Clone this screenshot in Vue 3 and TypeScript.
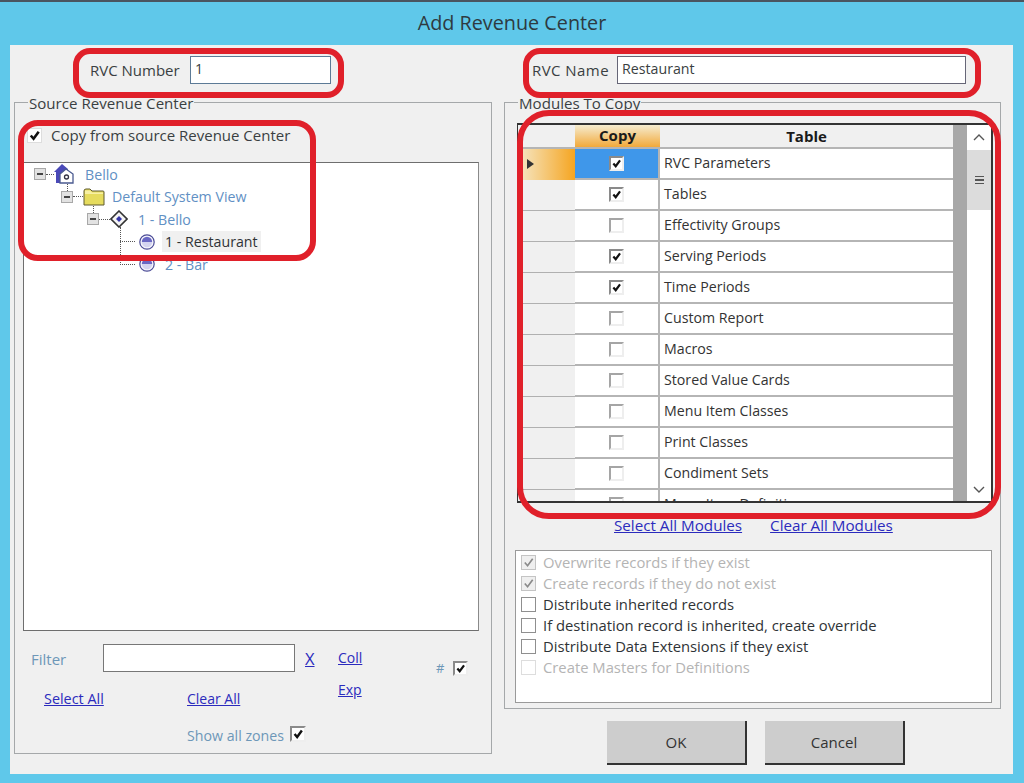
<script setup lang="ts">
interface Row { name: string; on: boolean }
const rows: Row[] = [
  { name: 'RVC Parameters', on: true },
  { name: 'Tables', on: true },
  { name: 'Effectivity Groups', on: false },
  { name: 'Serving Periods', on: true },
  { name: 'Time Periods', on: true },
  { name: 'Custom Report', on: false },
  { name: 'Macros', on: false },
  { name: 'Stored Value Cards', on: false },
  { name: 'Menu Item Classes', on: false },
  { name: 'Print Classes', on: false },
  { name: 'Condiment Sets', on: false },
  { name: 'Menu Item Definitions', on: false },
]
interface Opt { text: string; state: 'grey' | 'empty' | 'disabled' }
const opts: Opt[] = [
  { text: 'Overwrite records if they exist', state: 'grey' },
  { text: 'Create records if they do not exist', state: 'grey' },
  { text: 'Distribute inherited records', state: 'empty' },
  { text: 'If destination record is inherited, create override', state: 'empty' },
  { text: 'Distribute Data Extensions if they exist', state: 'empty' },
  { text: 'Create Masters for Definitions', state: 'disabled' },
]
</script>

<template>
  <div class="screen">
    <div class="tick"></div>
    <header class="title">Add Revenue Center</header>
    <main class="win">
      <section class="col left">
        <div class="toprow num">
          <label>RVC Number</label>
          <div class="input w140">1</div>
        </div>
        <div class="group gl">
          <span class="legend">Source Revenue Center</span>
          <div class="copyfrom">
            <span class="cb plain"><svg viewBox="0 0 14 14"><path d="M3 7l3 3.5L11.5 3" /></svg></span>
            <span>Copy from source Revenue Center</span>
          </div>
          <div class="tree">
            <div class="node l1">
              <span class="exp"></span><span class="dots d7"></span>
              <svg class="ic house" viewBox="0 0 20 20">
                <path d="M0 8L8 0l6 5v14H2V8z" fill="#4a49b8" />
                <path d="M6 10l6-5 7 5v9H6z" fill="#fff" stroke="#4a5a90" stroke-width="1.3" />
                <circle cx="12.5" cy="13" r="2" fill="none" stroke="#334" stroke-width="1.3" />
              </svg>
              <span class="lbl t11">Bello</span>
            </div>
            <div class="node l2">
              <span class="exp up"></span><span class="dots d9"></span>
              <svg class="ic folder" viewBox="0 0 22 18">
                <path d="M1 3a2 2 0 0 1 2-2h4l2 2h11a1 1 0 0 1 1 1v13H1z" fill="#e6dc5e" stroke="#5e5b30" />
                <path d="M2 2.500h5l2 2h11v1.500H2z" fill="#f7f0a4" />
              </svg>
              <span class="lbl t8">Default System View</span>
            </div>
            <div class="node l3">
              <span class="exp up"></span><span class="dots d10"></span>
              <svg class="ic diamond" viewBox="0 0 18 18">
                <path d="M9 1l8 8-8 8-8-8z" fill="#f5f5f5" stroke="#333" stroke-width="1.6" />
                <path d="M9 6l3 3-3 3-3-3z" fill="#3535a8" />
              </svg>
              <span class="lbl t10">1 - Bello</span>
              <span class="vline"></span>
            </div>
            <div class="node l4">
              <span class="dots d15"></span>
              <svg class="ic radio" viewBox="0 0 16 16">
                <circle cx="8" cy="8" r="7.200" fill="#f4f4fb" stroke="#4b4b96" stroke-width="1.200" />
                <path d="M2.800 8a5.200 5.200 0 0 1 10.400 0z" fill="#6a68c4" /><path d="M2.800 8a5.200 5.200 0 0 0 10.400 0z" fill="#d4d4f0" />
              </svg>
              <span class="lbl sel">1 - Restaurant</span>
            </div>
            <div class="node l4">
              <span class="dots d15"></span>
              <svg class="ic radio" viewBox="0 0 16 16">
                <circle cx="8" cy="8" r="7.200" fill="#f4f4fb" stroke="#4b4b96" stroke-width="1.200" />
                <path d="M2.800 8a5.200 5.200 0 0 1 10.400 0z" fill="#6a68c4" /><path d="M2.800 8a5.200 5.200 0 0 0 10.400 0z" fill="#d4d4f0" />
              </svg>
              <span class="lbl t10">2 - Bar</span>
            </div>
          </div>
          <div class="filter">
            <span class="flabel a-filter">Filter</span>
            <div class="input a-input"></div>
            <a class="link a-x">X</a>
            <a class="link sm a-coll">Coll</a>
            <a class="link sm a-exp">Exp</a>
            <div class="a-hash"><span class="flabel">#</span><span class="cb dark"><svg viewBox="0 0 14 14"><path d="M3 7l3 3.5L11.5 3" /></svg></span></div>
            <a class="link sm a-sel">Select All</a>
            <a class="link sm a-clr">Clear All</a>
            <div class="a-zones"><span class="flabel">Show all zones</span><span class="cb dark"><svg viewBox="0 0 14 14"><path d="M3 7l3 3.5L11.5 3" /></svg></span></div>
          </div>
        </div>
      </section>

      <section class="col right">
        <div class="toprow name">
          <label>RVC Name</label>
          <div class="input w348">Restaurant</div>
        </div>
        <div class="group gr">
          <span class="legend">Modules To Copy</span>
          <div class="grid">
            <div class="gridbody">
              <div class="ghead">
                <div class="c0"></div>
                <div class="c1 hcopy">Copy</div>
                <div class="c2 htable">Table</div>
              </div>
              <div v-for="(r, i) in rows" :key="r.name" class="grow">
                <div class="c0" :class="{ cur: i === 0 }"><span v-if="i === 0" class="arrow"></span></div>
                <div class="c1 cell" :class="{ active: i === 0 }">
                  <span class="cb" :class="r.on ? 'dark' : 'off'"><svg v-if="r.on" viewBox="0 0 14 14"><path d="M3 7l3 3.5L11.5 3" /></svg></span>
                </div>
                <div class="c2 cell txt">{{ r.name }}</div>
              </div>
            </div>
            <div class="strip"></div>
            <div class="sbar">
              <svg class="sarrow" viewBox="0 0 22 24"><path d="M6 15l5-5 5 5" /></svg>
              <div class="thumb"><i></i><i></i><i></i></div>
              <div class="track"></div>
              <svg class="sarrow" viewBox="0 0 22 24"><path d="M6 10l5 5 5-5" /></svg>
            </div>
          </div>
          <div class="modlinks">
            <a class="link">Select All Modules</a>
            <a class="link">Clear All Modules</a>
          </div>
          <div class="opts">
            <div v-for="o in opts" :key="o.text" class="opt" :class="o.state">
              <span class="cb"><svg v-if="o.state === 'grey'" viewBox="0 0 14 14"><path d="M3 7l3 3.5L11.5 3" /></svg></span>
              <span>{{ o.text }}</span>
            </div>
          </div>
        </div>
        <div class="btns">
          <button class="btn">OK</button>
          <button class="btn">Cancel</button>
        </div>
      </section>

      <div class="mark m1"></div>
      <div class="mark m2"></div>
      <div class="mark m3"></div>
      <div class="mark m4"></div>
    </main>
  </div>
</template>

<style>
html, body { margin: 0; background: #5fc8ea; }
</style>

<style scoped>
* { box-sizing: border-box; }
.screen {
  position: relative; width: 1024px; height: 783px; overflow: hidden;
  background: #5fc8ea; border-top: 2px solid #4a5560;
  font-family: "Open Sans", "Noto Sans", sans-serif; font-size: 15px; color: #3a3f42;
}
.tick { position: absolute; left: 619px; top: -2px; width: 1px; height: 2px; background: #333; }
.title { height: 43px; padding-top: 6px; text-align: center; font-size: 19.8px; line-height: 30px; color: #2e3a40; }
.win {
  position: relative; width: 1003px; height: 729px; margin-left: 10px;
  background: #f0f0f0; padding-left: 4px; display: flex; gap: 12px;
}
.col { display: flex; flex-direction: column; }
.left { width: 478px; }
.right { width: 497px; }
.toprow { height: 57px; display: flex; padding-top: 11px; align-items: flex-start; }
.toprow label { line-height: 28px; flex: none; }
.num { padding-left: 76px; }
.num label { width: 100px; }
.name { padding-left: 28px; }
.name label { width: 85px; letter-spacing: 0.45px; }
.input { height: 28px; background: #fff; border: 1px solid #667; padding: 0 4px; line-height: 24px; font-size: 14.2px; }
.w140 { width: 141px; border-color: #5c7a96; }
.w348 { width: 349px; }
.group { position: relative; border: 1px solid #a5a8aa; }
.gl { height: 652px; padding: 0 12px 0 8px; }
.gr { height: 607px; padding: 0 8px 0 12px; }
.legend { position: absolute; left: 13px; top: -10px; background: #f0f0f0; padding: 0 1px; line-height: 20px; font-size: 15.1px; }
.copyfrom { height: 59px; padding: 21px 0 0 4px; display: flex; align-items: flex-start; gap: 9px; line-height: 22px; }
.copyfrom .cb { margin-top: 4px; }
.cb { display: inline-flex; width: 15px; height: 15px; background: #fff; border: 1px solid #a0a0a0; flex: none; }
.cb svg { width: 100%; height: 100%; }
.cb path { fill: none; stroke: #111; stroke-width: 2.8; }
.cb.plain { border-color: #ddd; }
.cb.dark { border: 2px solid #8a8a8a; border-right-color: #eee; border-bottom-color: #eee; }
.cb.off { border: 2px solid #a5a5a5; border-right-color: #eee; border-bottom-color: #eee; }
.tree { position: relative; height: 469px; background: #fff; border: 1px solid #6e6e6e; border-right-color: #8a8a8a; font-size: 14.2px; }
.node { position: relative; height: 22.5px; display: flex; align-items: center; }
.l1 { padding-left: 10px; }
.l2 { padding-left: 37px; }
.l3 { padding-left: 63px; }
.l4 { padding-left: 96px; }
.exp { position: relative; width: 12px; height: 12px; background: #e2e2e2; border: 1px solid #a8a8a8; flex: none; }
.exp::after { content: ""; position: absolute; left: 2px; right: 2px; top: 4px; height: 2px; background: #444; }
.exp.up::before { content: ""; position: absolute; left: 5px; top: -8px; height: 7px; border-left: 1px dotted #555; }
.dots { border-top: 1px dotted #555; height: 0; flex: none; }
.d7 { width: 8px; }
.d9 { width: 10px; }
.d10 { width: 11px; }
.d15 { width: 15px; margin-right: 4px; }
.ic { flex: none; }
.house { width: 20px; height: 20px; }
.folder { width: 22px; height: 18px; }
.diamond { width: 18px; height: 18px; }
.radio { width: 16px; height: 16px; }
.lbl { color: #6190c4; white-space: nowrap; line-height: 21px; }
.t11 { margin-left: 11px; }
.t8 { margin-left: 7px; }
.t10 { margin-left: 10px; }
.sel { margin-left: 7px; padding: 0 3px; background: #f0f0f0; color: #2f3336; }
.vline { position: absolute; left: 96px; top: 19px; height: 36px; border-left: 1px dotted #555; }
.filter {
  position: relative; height: 122px; display: grid;
  grid-template-columns: 80px 192px 43px 98px 1fr;
  grid-template-rows: 28px 26px 40px; padding: 13px 0 0 0;
}
.flabel { color: #6d97b8; }
.a-filter { grid-area: 1/1; padding-left: 8px; line-height: 30px; }
.a-input { grid-area: 1/2; border-color: #777; }
.a-x { grid-area: 1/3; padding-left: 10px; line-height: 30px; font-size: 16.5px; }
.a-coll { grid-area: 1/4; line-height: 28px; }
.a-exp { grid-area: 2/4; line-height: 36px; }
.a-hash { grid-area: 1/5; display: flex; gap: 9px; align-items: center; margin-top: 16px; height: 16px; font-size: 13px; }
.a-sel { grid-area: 2/1/2/3; padding-left: 21px; line-height: 54px; font-size: 14.4px; }
.a-clr { grid-area: 2/2; padding-left: 84px; line-height: 54px; }
.a-zones { grid-area: 3/2; padding-left: 84px; display: flex; gap: 6px; align-items: flex-start; padding-top: 28px; line-height: 20px; white-space: nowrap; font-size: 14.2px; }
.a-zones .cb { width: 16px; height: 16px; }
.link { color: #2b2bbd; text-decoration: underline; cursor: pointer; white-space: nowrap; }
.link.sm { font-size: 14px; }
.a-sel.link.sm { font-size: 14.4px; }
.grid { position: relative; margin-top: 20px; width: 476px; height: 380px; border: 2px solid #333; border-left-width: 1px; border-right-width: 2px; display: flex; background: #fff; overflow: hidden; }
.gridbody { width: 435px; flex: none; overflow: hidden; }
.ghead { height: 24px; display: flex; background: #f0f0f0; border-bottom: 2px solid #b5b5b5; }
.c0 { width: 57px; flex: none; background: #f0f0f0; border-bottom: 1px solid #b0b0b0; }
.ghead .c0 { border-bottom: 0; }
.c1 { width: 85px; flex: none; display: flex; align-items: center; justify-content: center; }
.c2 { flex: 1; }
.hcopy { font-weight: 700; color: #1a1a1a; background: linear-gradient(#f5ecd0, #f2a93a); line-height: 22px; padding-bottom: 2px; }
.htable { font-weight: 700; color: #1a1a1a; text-align: center; line-height: 22px; }
.grow { height: 31px; display: flex; }
.cell { border-bottom: 2px solid #b5b5b5; }
.c1.cell { border-right: 2px solid #b5b5b5; }
.active { background: #3f97ea; }
.cur { background: linear-gradient(90deg, #f5e8c8, #f5a521); border-bottom: 0; position: relative; }
.arrow { position: absolute; left: 9px; top: 10px; border-left: 7px solid #333; border-top: 5px solid transparent; border-bottom: 5px solid transparent; }
.txt { padding-left: 4px; line-height: 27px; color: #333; white-space: nowrap; font-size: 14.2px; }
.strip { width: 14px; background: #a8a8a8; flex: none; }
.sbar { flex: 1; display: flex; flex-direction: column; background: #fff; }
.sarrow { width: 100%; height: 24px; flex: none; }
.sarrow path { fill: none; stroke: #555; stroke-width: 1.4; }
.thumb { height: 60px; background: #dcdcdc; display: flex; flex-direction: column; gap: 2px; align-items: center; justify-content: center; margin-top: 1px; }
.thumb i { width: 9px; height: 1.5px; background: #555; }
.track { flex: 1; }
.modlinks { display: flex; gap: 28px; padding: 10px 0 0 97px; line-height: 24px; height: 47px; font-size: 15.2px; }
.opts { width: 477px; height: 153px; margin-left: -2px; background: #fff; border: 1px solid #9a9a9a; padding: 1px 0 0 5px; font-size: 14.8px; }
.opt { height: 21px; display: flex; align-items: center; gap: 7px; white-space: nowrap; color: #2f3336; line-height: 21px; }
.opt .cb { width: 15px; height: 15px; border: 1px solid #8f8f8f; }
.opt.grey { color: #b4b4b4; }
.opt.grey .cb { background: #efefef; border-color: #c4c4c4; }
.opt.grey .cb path { stroke: #8a8a8a; stroke-width: 1.8; }
.opt.disabled { color: #b4b4b4; }
.opt.disabled .cb { border-color: #ddd; }
.btns { display: flex; gap: 18px; padding: 12px 0 0 103px; }
.btn { width: 140px; height: 44px; background: #cdcdcd; border: 0; border-right: 2px solid #333; border-bottom: 2px solid #333; font: inherit; color: #333; padding: 0; }
.mark { position: absolute; border: 6px solid #e0202a; pointer-events: none; }
.m1 { left: 63px; top: 3px; width: 271px; height: 50px; border-radius: 17px; }
.m2 { left: 513px; top: 3px; width: 458px; height: 50px; border-radius: 17px; }
.m3 { left: 8px; top: 75px; width: 298px; height: 141px; border-radius: 20px; }
.m4 { left: 507px; top: 65px; width: 484px; height: 409px; border-radius: 32px; }
</style>
